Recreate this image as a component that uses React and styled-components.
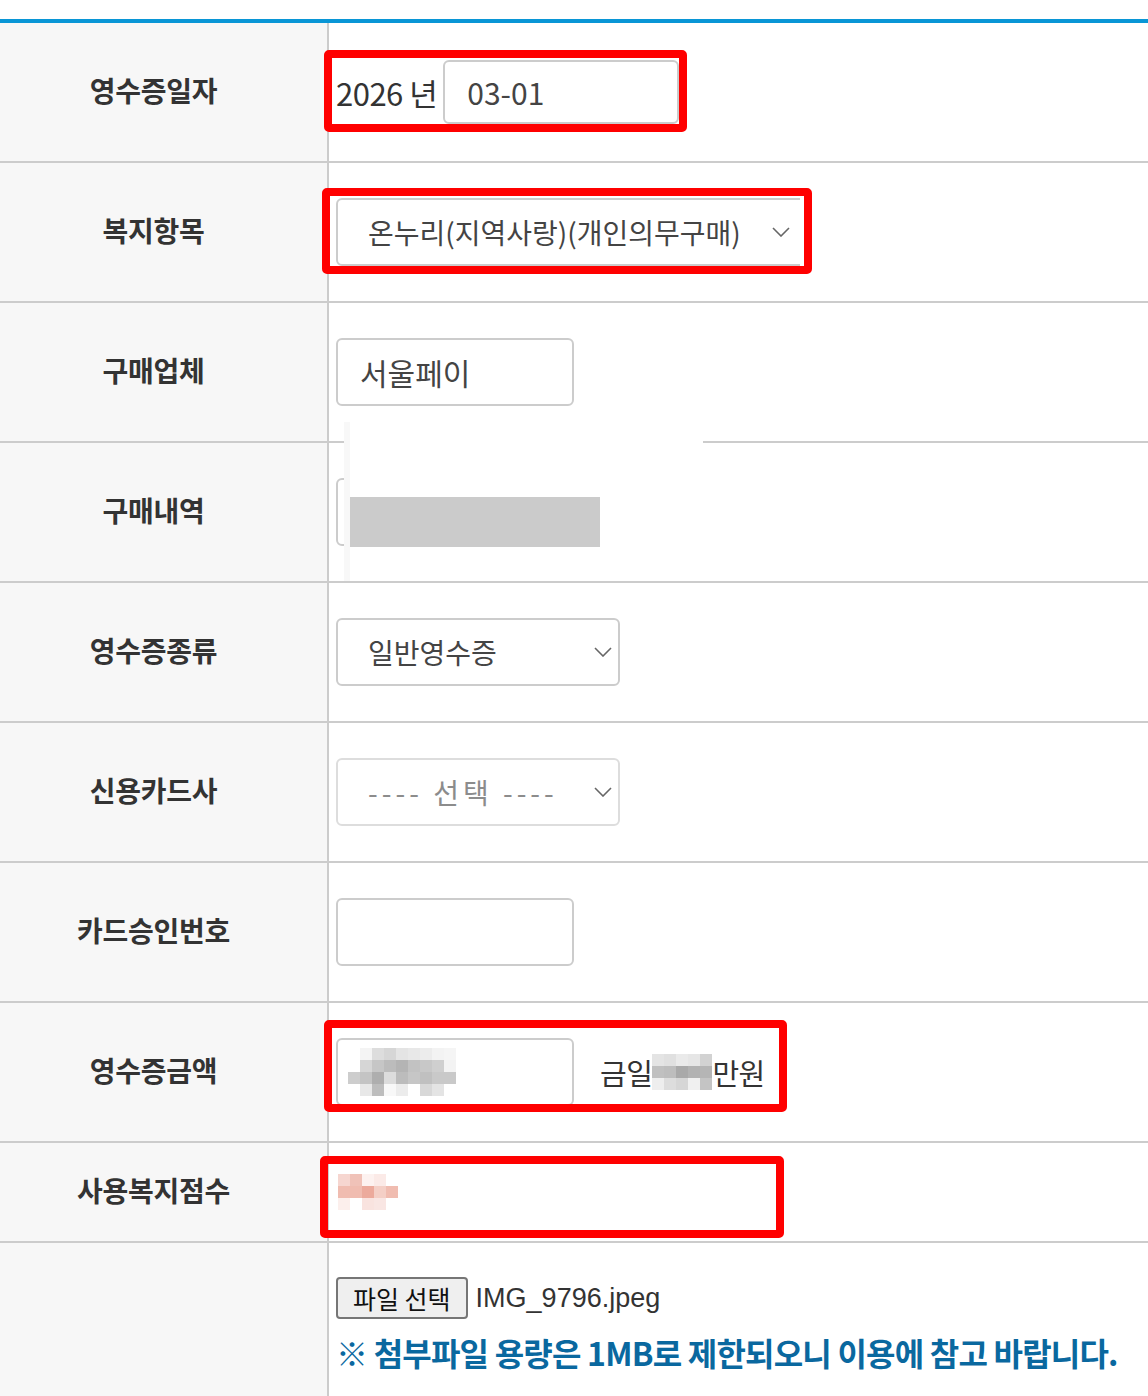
import React from 'react'
import styled, { createGlobalStyle } from 'styled-components'

const GlobalStyle = createGlobalStyle`
    html, body {
        margin: 0;
        padding: 0;
        background: #fff;
    }
    body {
        font-family: "Noto Sans CJK KR", "Noto Sans", sans-serif;
        color: #333;
    }
`

const blurGray = [
    [1, 0, '#f4f4f4'], [2, 0, '#dddddd'], [3, 0, '#d6d6d6'], [4, 0, '#e4e4e4'], [5, 0, '#e8e8e8'], [6, 0, '#ececec'], [7, 0, '#f3f3f3'], [8, 0, '#f5f5f5'],
    [1, 1, '#d6d6d6'], [2, 1, '#c6c6c6'], [3, 1, '#bcbcbc'], [4, 1, '#b4b4b4'], [5, 1, '#c2c2c2'], [6, 1, '#c8c8c8'], [7, 1, '#cfcfcf'], [8, 1, '#f3f3f3'],
    [0, 2, '#cdcdcd'], [1, 2, '#c4c4c4'], [2, 2, '#aeaeae'], [3, 2, '#dcdcdc'], [4, 2, '#bcbcbc'], [5, 2, '#c6c6c6'], [6, 2, '#c0c0c0'], [7, 2, '#c9c9c9'], [8, 2, '#c9c9c9'],
    [1, 3, '#e8e8e8'], [2, 3, '#bdbdbd'], [3, 3, '#f8f8f8'], [4, 3, '#ececec'], [6, 3, '#d8d8d8'], [7, 3, '#e4e4e4'],
]

const blurWon = [
    [0, 0, '#e4e4e4'], [1, 0, '#e0e0e0'], [2, 0, '#eaeaea'], [3, 0, '#e6e6e6'], [4, 0, '#d2d2d2'],
    [0, 1, '#c0c0c0'], [1, 1, '#bdbdbd'], [2, 1, '#a9a9a9'], [3, 1, '#b2b2b2'], [4, 1, '#b5b5b5'],
    [0, 2, '#eeeeee'], [1, 2, '#dddddd'], [2, 2, '#d6d6d6'], [3, 2, '#f0f0f0'], [4, 2, '#c4c4c4'],
]

const blurPink = [
    [0, 0, '#f6d6d0'], [1, 0, '#f0c2b8'], [2, 0, '#fdf2f0'], [3, 0, '#fbeae7'],
    [0, 1, '#f0bcb0'], [1, 1, '#f0bcb0'], [2, 1, '#ecaa9c'], [3, 1, '#f4cfc6'], [4, 1, '#f0bcb0'],
    [0, 2, '#fcefec'], [2, 2, '#f9e3df'], [3, 2, '#f9e6e3'],
]

function Pixels({ cells, size, w, h }) {
    return (
        <svg width={w} height={h} viewBox={`0 0 ${w} ${h}`}>
            {cells.map(([cx, cy, c], i) => (
                <rect key={i} x={cx * size} y={cy * size} width={size} height={size} fill={c} />
            ))}
        </svg>
    )
}

function Chevron() {
    return (
        <svg width="18" height="10" viewBox="0 0 18 10" fill="none">
            <path d="M1 1 L9 9 L17 1" stroke="#666" strokeWidth="1.6" />
        </svg>
    )
}

function App() {
    return (
        <>
            <GlobalStyle />
            <Page>
                <Table>
                    <Row>
                        <Label>영수증일자</Label>
                        <Cell>
                            <Marked $t={-10} $l={-12} $r={-8} $b={-8}>
                                <Year>2026 년</Year>
                                <Input $w={236} $h={64} defaultValue="03-01" />
                            </Marked>
                        </Cell>
                    </Row>
                    <Row>
                        <Label>복지항목</Label>
                        <Cell>
                            <Marked $t={-10} $l={-14} $r={-6} $b={-8} $clip>
                                <SelectWrap $w={470}>
                                    <Select defaultValue="a">
                                        <option value="a">온누리(지역사랑)(개인의무구매)</option>
                                    </Select>
                                    <Arrow $right={16}><Chevron /></Arrow>
                                </SelectWrap>
                            </Marked>
                        </Cell>
                    </Row>
                    <Row>
                        <Label>구매업체</Label>
                        <Cell>
                            <Input $w={238} defaultValue="서울페이" />
                        </Cell>
                    </Row>
                    <Row>
                        <Label>구매내역</Label>
                        <Cell>
                            <Input $w={238} />
                            <Redact>
                                <RedactBar />
                            </Redact>
                        </Cell>
                    </Row>
                    <Row>
                        <Label>영수증종류</Label>
                        <Cell>
                            <SelectWrap $w={284}>
                                <Select defaultValue="a">
                                    <option value="a">일반영수증</option>
                                </Select>
                                <Arrow $right={8}><Chevron /></Arrow>
                            </SelectWrap>
                        </Cell>
                    </Row>
                    <Row>
                        <Label>신용카드사</Label>
                        <Cell>
                            <SelectWrap $w={284}>
                                <Select defaultValue="a" $muted>
                                    <option value="a">---- 선택 ----</option>
                                </Select>
                                <Arrow $right={8}><Chevron /></Arrow>
                            </SelectWrap>
                        </Cell>
                    </Row>
                    <Row>
                        <Label>카드승인번호</Label>
                        <Cell>
                            <Input $w={238} />
                        </Cell>
                    </Row>
                    <Row>
                        <Label>영수증금액</Label>
                        <Cell>
                            <Marked $t={-18} $l={-12} $r={-22} $b={-6}>
                                <AmountBox>
                                    <Pixels cells={blurGray} size={12} w={120} h={48} />
                                </AmountBox>
                                <Won>
                                    금일
                                    <Pixels cells={blurWon} size={12} w={60} h={36} />
                                    만원
                                </Won>
                            </Marked>
                        </Cell>
                    </Row>
                    <Row $h={100}>
                        <Label>사용복지점수</Label>
                        <Cell>
                            <PointFrame>
                                <Pixels cells={blurPink} size={12} w={72} h={40} />
                            </PointFrame>
                        </Cell>
                    </Row>
                    <Row $last>
                        <Label />
                        <FileCell>
                            <FileLine>
                                <FileButton type="button">파일 선택</FileButton>
                                <FileName>IMG_9796.jpeg</FileName>
                            </FileLine>
                            <Notice>※ 첨부파일 용량은 1MB로 제한되오니 이용에 참고 바랍니다.</Notice>
                        </FileCell>
                    </Row>
                </Table>
            </Page>
        </>
    )
}

export default App

const Page = styled.div`
    width: 1148px;
    height: 1396px;
    overflow: hidden;
    padding-top: 19px;
    box-sizing: border-box;
`

const Table = styled.div`
    border-top: 4px solid #0996d6;
`

const Row = styled.div`
    display: grid;
    grid-template-columns: 329px 1fr;
    height: ${p => (p.$last ? 160 : (p.$h || 140) - 2)}px;
    border-bottom: ${p => (p.$last ? 'none' : '2px solid #cccccc')};
`

const Label = styled.div`
    background: #f7f7f7;
    border-right: 2px solid #cccccc;
    display: flex;
    align-items: center;
    justify-content: center;
    padding-right: 20px;
    padding-bottom: 4px;
    font-size: 28px;
    font-weight: 700;
    color: #333;
    letter-spacing: -0.3px;
`

const Cell = styled.div`
    position: relative;
    display: flex;
    align-items: center;
    padding-left: 7px;
`

const Marked = styled.div`
    position: relative;
    display: flex;
    align-items: center;
    &::after {
        content: "";
        position: absolute;
        top: ${p => p.$t}px;
        left: ${p => p.$l}px;
        right: ${p => p.$r}px;
        bottom: ${p => p.$b}px;
        border: 8px solid #ff0000;
        border-radius: 5px;
        pointer-events: none;
    }
    ${p => p.$clip && `
        & > div { clip-path: inset(0 6px 0 0); }
    `}
`

const Year = styled.span`
    font-size: 31px;
    color: #333;
    margin-right: 6px;
    letter-spacing: -0.5px;
`

const Input = styled.input`
    box-sizing: border-box;
    width: ${p => p.$w}px;
    height: ${p => p.$h || 68}px;
    border: 2px solid #cccccc;
    border-radius: 6px;
    padding: 0 22px;
    font-family: "Noto Sans CJK KR", "Noto Sans", sans-serif;
    font-size: 30px;
    color: #444;
    background: #fff;
    outline: none;
`

const SelectWrap = styled.div`
    position: relative;
    width: ${p => p.$w}px;
    height: 68px;
`

const Select = styled.select`
    appearance: none;
    -webkit-appearance: none;
    box-sizing: border-box;
    width: 100%;
    height: 100%;
    border: 2px solid ${p => (p.$muted ? '#dddddd' : '#cccccc')};
    border-radius: 6px;
    padding: 0 30px;
    background: #fff;
    font-family: "Noto Sans CJK KR", "Noto Sans", sans-serif;
    font-size: 28px;
    letter-spacing: ${p => (p.$muted ? '4px' : '0')};
    color: ${p => (p.$muted ? '#8c8c8c' : '#444')};
    outline: none;
`

const Arrow = styled.span`
    position: absolute;
    right: ${p => p.$right}px;
    top: 50%;
    transform: translateY(-50%);
    display: flex;
    pointer-events: none;
`

const Redact = styled.div`
    position: absolute;
    left: 15px;
    top: -21px;
    width: 359px;
    height: 159px;
    background: #fff;
    border-left: 6px solid #f8f8f8;
    box-sizing: border-box;
    display: flex;
    align-items: center;
`

const RedactBar = styled.div`
    width: 250px;
    height: 50px;
    background: #cbcbcb;
    margin-top: 40px;
`

const AmountBox = styled.div`
    box-sizing: border-box;
    width: 238px;
    height: 68px;
    border: 2px solid #cccccc;
    border-radius: 6px;
    display: flex;
    align-items: center;
    padding-left: 10px;
`

const Won = styled.div`
    display: flex;
    align-items: center;
    margin-left: 26px;
    font-size: 29px;
    color: #333;
    letter-spacing: -0.5px;
`

const PointFrame = styled.div`
    box-sizing: border-box;
    width: 464px;
    height: 82px;
    margin-left: -16px;
    margin-top: 10px;
    border: 8px solid #ff0000;
    border-radius: 5px;
    padding: 10px 0 0 10px;
`

const FileCell = styled.div`
    display: flex;
    flex-direction: column;
    padding: 34px 0 0 7px;
`

const FileLine = styled.div`
    display: flex;
    align-items: center;
    gap: 8px;
`

const FileButton = styled.button`
    height: 42px;
    padding: 0 15px;
    background: #efefef;
    border: 2px solid #767676;
    border-radius: 4px;
    font-family: "Noto Sans CJK KR", "Noto Sans", sans-serif;
    font-size: 25px;
    color: #111;
    line-height: 1;
`

const FileName = styled.span`
    font-family: "Liberation Sans", Arial, sans-serif;
    font-size: 27px;
    color: #333;
`

const Notice = styled.div`
    margin-top: 10px;
    font-size: 32px;
    font-weight: 700;
    color: #0a689f;
    letter-spacing: -0.8px;
    white-space: nowrap;
`
